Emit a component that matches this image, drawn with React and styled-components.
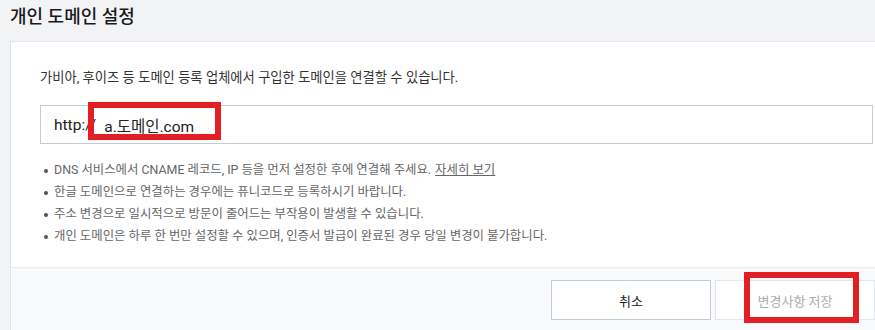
import React from "react";
import styled, { createGlobalStyle } from "styled-components";

const GlobalStyle = createGlobalStyle`
  body {
    margin: 0;
    background: #f2f3f5;
    font-family: Roboto, "Noto Sans CJK KR", "Noto Sans", sans-serif;
    overflow: hidden;
  }
`;

const notices = [
  "DNS 서비스에서 CNAME 레코드, IP 등을 먼저 설정한 후에 연결해 주세요.",
  "한글 도메인으로 연결하는 경우에는 퓨니코드로 등록하시기 바랍니다.",
  "주소 변경으로 일시적으로 방문이 줄어드는 부작용이 발생할 수 있습니다.",
  "개인 도메인은 하루 한 번만 설정할 수 있으며, 인증서 발급이 완료된 경우 당일 변경이 불가합니다.",
];

export default function App() {
  return (
    <>
      <GlobalStyle />
      <Page>
        <Title>개인 도메인 설정</Title>
        <Card>
          <Body>
            <Description>
              가비아, 후이즈 등 도메인 등록 업체에서 구입한 도메인을 연결할 수 있습니다.
            </Description>
            <InputBox>
              <Prefix>http://</Prefix>
              <Value>a.도메인.com</Value>
              <Highlight $left={47} $top={-4} $width={133} $height={38} />
            </InputBox>
            <NoticeList>
              {notices.map((text, i) => (
                <Notice key={i}>
                  {text}
                  {i === 0 && <MoreLink>자세히 보기</MoreLink>}
                </Notice>
              ))}
            </NoticeList>
          </Body>
          <Footer>
            <Button>취소</Button>
            <Button $disabled>
              변경사항 저장
              <Highlight $left={28} $top={-9} $width={115} $height={51} />
            </Button>
          </Footer>
        </Card>
      </Page>
    </>
  );
}

const Page = styled.div`
  padding-left: 10px;
  width: 875px;
  box-sizing: border-box;
`;

const Title = styled.h1`
  margin: 0;
  height: 41px;
  padding-top: 4px;
  box-sizing: border-box;
  font-size: 18px;
  font-weight: 500;
  line-height: 26px;
  color: #1a1a1a;
`;

const Card = styled.div`
  background: #fff;
  border-top: 1px solid #e4e6ec;
  border-left: 1px solid #e0e2ea;
  height: 289px;
  display: flex;
  flex-direction: column;
`;

const Body = styled.div`
  padding: 26px 2px 20px 29px;
`;

const Description = styled.p`
  margin: 0;
  font-size: 13.3px;
  line-height: 20px;
  color: #333;
`;

const InputBox = styled.div`
  position: relative;
  margin-top: 17px;
  height: 39px;
  border: 1px solid #c5ccd6;
  box-sizing: border-box;
  display: flex;
  align-items: center;
  padding-left: 13px;
  font-size: 15.5px;
  color: #222;
`;

const Prefix = styled.span``;

const Value = styled.span`
  margin-left: 8px;
`;

const Highlight = styled.span`
  position: absolute;
  left: ${(p) => p.$left}px;
  top: ${(p) => p.$top}px;
  width: ${(p) => p.$width}px;
  height: ${(p) => p.$height}px;
  border: 6px solid #e31e24;
  box-sizing: border-box;
  pointer-events: none;
`;

const NoticeList = styled.ul`
  margin: 15px 0 0;
  padding: 0 0 0 14px;
  list-style: none;
`;

const Notice = styled.li`
  position: relative;
  font-size: 12.4px;
  line-height: 22px;
  color: #666;

  &::before {
    content: "";
    position: absolute;
    left: -10px;
    top: 10px;
    width: 4px;
    height: 4px;
    border-radius: 50%;
    background: #555;
  }
`;

const MoreLink = styled.a`
  margin-left: 4px;
  color: #666;
  text-decoration: underline;
  cursor: pointer;
`;

const Footer = styled.div`
  flex: 1;
  border-top: 1px solid #e9ebef;
  background: #f8f9fb;
  display: flex;
  justify-content: flex-end;
  align-items: flex-start;
  gap: 4px;
  padding: 12px 0 0;
`;

const Button = styled.button`
  position: relative;
  width: 160px;
  height: 40px;
  background: #fff;
  border: 1px solid ${(p) => (p.$disabled ? "#e3e6eb" : "#c5ccd6")};
  color: ${(p) => (p.$disabled ? "#a9adb3" : "#222")};
  font-family: inherit;
  font-size: 13px;
  padding: 0;
  cursor: pointer;
`;
